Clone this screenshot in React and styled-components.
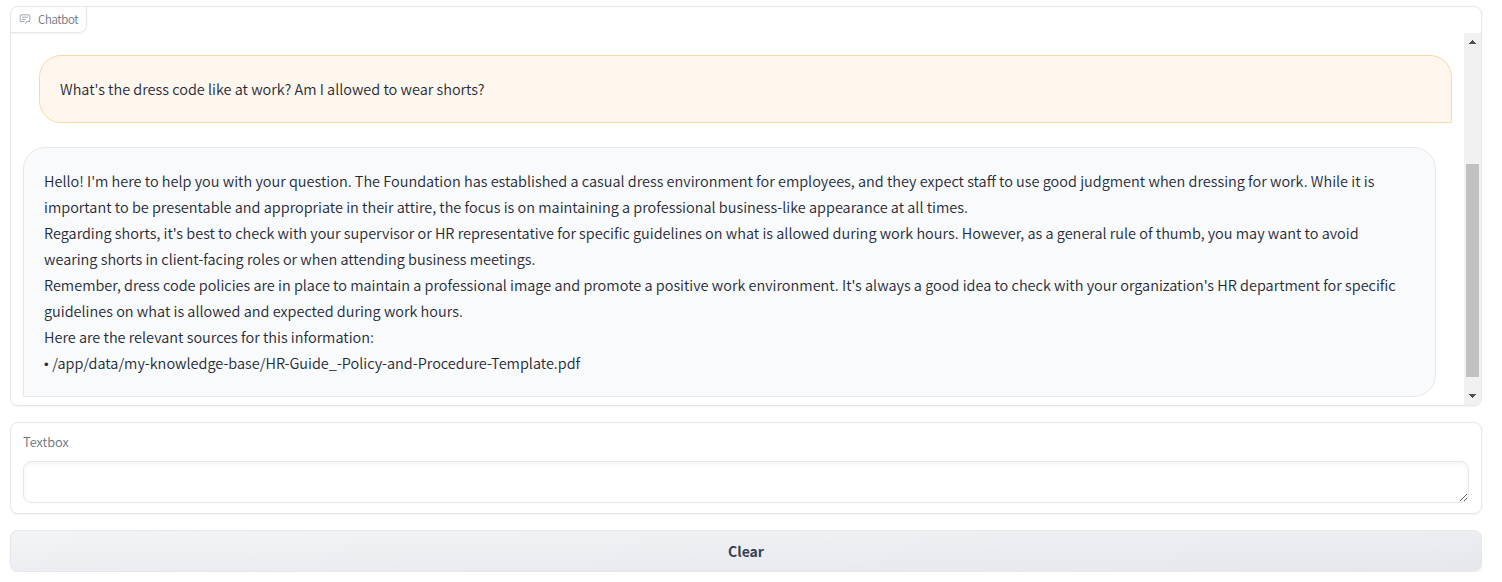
import React from "react";
import styled, { createGlobalStyle } from "styled-components";

const GlobalStyle = createGlobalStyle`
  *, *::before, *::after { box-sizing: border-box; }
  body {
    margin: 0;
    background: #fff;
    color: #1f2937;
    font-family: "Source Sans Pro", "Noto Sans CJK SC", sans-serif;
  }
`;

const Page = styled.main`
  display: flex;
  flex-direction: column;
  gap: 16px;
  width: 1492px;
  padding: 6px 10px 0;
`;

const Panel = styled.section`
  border: 1px solid #e5e7eb;
  border-radius: 8px;
  background: #fff;
  box-shadow: 0 1px 2px rgba(0, 0, 0, 0.05);
`;

const ChatPanel = styled(Panel)`
  display: flex;
  flex-direction: column;
  height: 400px;
  overflow: hidden;
`;

const BlockLabel = styled.div`
  display: flex;
  align-items: center;
  align-self: flex-start;
  gap: 7px;
  width: 77px;
  height: 27px;
  flex: none;
  margin: -1px 0 0 -1px;
  padding: 0 7px 1px 8px;
  border: 1px solid #e5e7eb;
  border-radius: 8px 0 8px 0;
  box-shadow: 0 1px 2px rgba(0, 0, 0, 0.05);
  color: #6b7280;
  font-size: 11.4px;
  font-weight: 350;
  letter-spacing: -0.3px;
  line-height: 18px;
  white-space: nowrap;

  svg {
    width: 12px;
    height: 12px;
    flex: none;
    opacity: 0.8;
  }
`;

const ScrollRegion = styled.div`
  display: flex;
  flex: 1;
  min-height: 0;
`;

const Messages = styled.div`
  display: flex;
  flex: 1;
  flex-direction: column;
  gap: 24px;
  padding: 22px 12px 0;
`;

const Bubble = styled.div`
  width: 1413px;
  padding: 20px;
  border: 1px solid ${(p) => (p.$user ? "#fed7aa" : "#e5e7eb")};
  border-radius: ${(p) => (p.$user ? "22px 22px 0 22px" : "22px 22px 22px 0")};
  align-self: ${(p) => (p.$user ? "flex-end" : "flex-start")};
  background: ${(p) => (p.$user ? "#fff7ed" : "#f9fafb")};
  font-size: 14.49px;
  font-weight: 350;
  line-height: 26px;
`;

const Line = styled.div`
  white-space: nowrap;
`;

const Bullet = styled.span`
  font-family: "Liberation Sans", sans-serif;
  font-size: 13px;
  line-height: 0;
`;

const Scrollbar = styled.div`
  display: flex;
  flex-direction: column;
  align-items: center;
  width: 17px;
  flex: none;
  background: #f1f1f1;
  color: #505050;
`;

const Arrow = styled.svg`
  width: 17px;
  height: 17px;
  flex: none;
  fill: currentColor;
`;

const Thumb = styled.div`
  width: 13px;
  height: 213px;
  margin: 114px 0 auto;
  background: #c1c1c1;
`;

const InputPanel = styled(Panel)`
  display: flex;
  flex-direction: column;
  height: 92px;
  padding: 8px 12px 10px;
`;

const FieldLabel = styled.label`
  height: 30px;
  color: #6b7280;
  font-size: 12.8px;
  font-weight: 350;
  line-height: 21px;
`;

const Field = styled.textarea`
  width: 100%;
  height: 42px;
  padding: 10px;
  border: 1px solid #e5e7eb;
  border-radius: 8px;
  outline: none;
  background: #fff;
  box-shadow: inset 0 2px 4px rgba(0, 0, 0, 0.05);
  font: inherit;
  resize: vertical;
`;

const ClearButton = styled.button`
  height: 42px;
  padding: 0;
  border: 1px solid #e5e7eb;
  border-radius: 8px;
  background: linear-gradient(to bottom right, #f3f4f6, #e5e7eb);
  box-shadow: 0 1px 2px rgba(0, 0, 0, 0.05);
  color: #374151;
  font-family: inherit;
  font-size: 14px;
  font-weight: 700;
  line-height: 20px;
`;

const answer = [
  "Hello! I'm here to help you with your question. The Foundation has established a casual dress environment for employees, and they expect staff to use good judgment when dressing for work. While it is",
  "important to be presentable and appropriate in their attire, the focus is on maintaining a professional business-like appearance at all times.",
  "Regarding shorts, it's best to check with your supervisor or HR representative for specific guidelines on what is allowed during work hours. However, as a general rule of thumb, you may want to avoid",
  "wearing shorts in client-facing roles or when attending business meetings.",
  "Remember, dress code policies are in place to maintain a professional image and promote a positive work environment. It's always a good idea to check with your organization's HR department for specific",
  "guidelines on what is allowed and expected during work hours.",
  "Here are the relevant sources for this information:",
];

function ChatIcon() {
  return (
    <svg viewBox="0 0 32 32" fill="currentColor" aria-hidden="true">
      <path d="M17.74 30L16 29l4-7h6a2 2 0 0 0 2-2V8a2 2 0 0 0-2-2H6a2 2 0 0 0-2 2v12a2 2 0 0 0 2 2h9v2H6a4 4 0 0 1-4-4V8a4 4 0 0 1 4-4h20a4 4 0 0 1 4 4v12a4 4 0 0 1-4 4h-4.84Z" />
      <path d="M8 10h16v2H8zm0 6h10v2H8z" />
    </svg>
  );
}

export default function App() {
  return (
    <>
      <GlobalStyle />
      <Page>
        <ChatPanel>
          <BlockLabel>
            <ChatIcon />
            Chatbot
          </BlockLabel>
          <ScrollRegion>
            <Messages>
              <Bubble $user>
                <Line>What's the dress code like at work? Am I allowed to wear shorts?</Line>
              </Bubble>
              <Bubble>
                {answer.map((text) => (
                  <Line key={text}>{text}</Line>
                ))}
                <Line>
                  <Bullet>• </Bullet>
                  /app/data/my-knowledge-base/HR-Guide_-Policy-and-Procedure-Template.pdf
                </Line>
              </Bubble>
            </Messages>
            <Scrollbar aria-hidden="true">
              <Arrow viewBox="0 0 17 17" shapeRendering="crispEdges">
                <path d="M5 11 8.5 7 12 11Z" />
              </Arrow>
              <Thumb />
              <Arrow viewBox="0 0 17 17" shapeRendering="crispEdges">
                <path d="M5 6 8.5 10 12 6Z" />
              </Arrow>
            </Scrollbar>
          </ScrollRegion>
        </ChatPanel>
        <InputPanel>
          <FieldLabel htmlFor="message">Textbox</FieldLabel>
          <Field id="message" rows={1} />
        </InputPanel>
        <ClearButton type="button">Clear</ClearButton>
      </Page>
    </>
  );
}
